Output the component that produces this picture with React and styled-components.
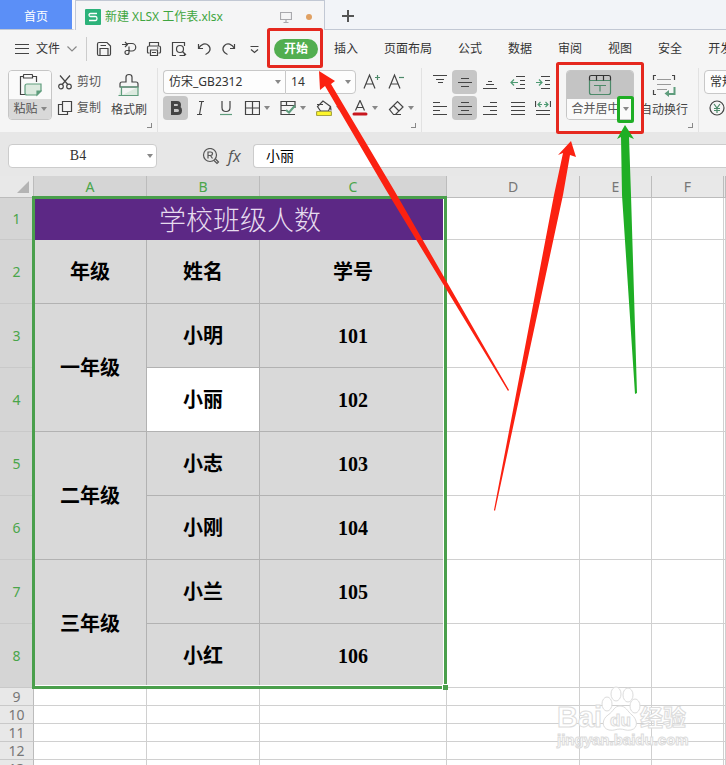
import styled, { createGlobalStyle } from "styled-components";
import { useState } from "react";

const MENUS = ["开始", "插入", "页面布局", "公式", "数据", "审阅", "视图", "安全", "开发工具"];
const COLUMNS = ["A", "B", "C", "D", "E", "F"];
const ROWS = [
    { a: "年级", b: "姓名", c: "学号" },
    { a: "一年级", span: 2, b: "小明", c: "101" },
    { b: "小丽", c: "102", active: true },
    { a: "二年级", span: 2, b: "小志", c: "103" },
    { b: "小刚", c: "104" },
    { a: "三年级", span: 2, b: "小兰", c: "105" },
    { b: "小红", c: "106" },
];
const EMPTY_ROWS = [9, 10, 11, 12, 13];

export default function App() {
    const [menu, setMenu] = useState("开始");
    const [formula, setFormula] = useState("小丽");
    return (
        <Page>
            <GlobalStyle />
            <TabBar />
            <MenuBar menu={menu} setMenu={setMenu} />
            <Ribbon />
            <FormulaBar>
                <NameBox>
                    <NameInput aria-label="名称框" defaultValue="B4" />
                    <Caret />
                </NameBox>
                <FormulaIcons>
                    <IconButton aria-label="查找"><FindIcon /></IconButton>
                    <FxButton aria-label="插入函数">fx</FxButton>
                </FormulaIcons>
                <FormulaInput aria-label="编辑栏" value={formula} onChange={(e) => setFormula(e.target.value)} />
            </FormulaBar>
            <Sheet />
            <Annotations />
        </Page>
    );
}

function TabBar() {
    return (
        <Tabs>
            <HomeTab>首页</HomeTab>
            <FileTab>
                <SheetLogo />
                <FileName>新建 XLSX 工作表.xlsx</FileName>
                <Icon w={12} h={12} c="#a9a9ad">
                    <path d="M.5 1.5h11v7H.5zM6 8.5V11M3.5 11.5h5" />
                </Icon>
                <Dot />
            </FileTab>
            <NewTab aria-label="新建标签">
                <Icon w={12} h={12} c="#555" sw={2}><path d="M6 0v12M0 6h12" /></Icon>
            </NewTab>
        </Tabs>
    );
}

function MenuBar({ menu, setMenu }) {
    return (
        <Menu>
            <FileButton>
                <Icon w={14} h={12}><path d="M0 1.5h14M0 5.5h14M0 10.5h14" /></Icon>
                文件
                <Icon w={10} h={6} c="#888"><path d="M.5.5 5 5 9.5.5" /></Icon>
            </FileButton>
            <QuickAccess>
                <IconButton aria-label="保存">
                    <Icon><path d="M1.5 3q0-1.5 1.5-1.5h8l3.5 3.5v8q0 1.5-1.5 1.5H3q-1.5 0-1.5-1.5zM4 14V7.5h8V14M4.5 4.5H10" /></Icon>
                </IconButton>
                <IconButton aria-label="输出">
                    <Icon><path d="M1 3.5h5M4 1l2.5 2.5L4 6M6.5 2.5H11a3.7 3.7 0 0 1 0 7.5H8M8 5.5v6a2 2 0 1 1-2-2h3" /></Icon>
                </IconButton>
                <IconButton aria-label="打印">
                    <Icon><path d="M3.5 5V1.5h9V5M3.5 12h-1q-1 0-1-1V6.5q0-1.5 1.5-1.5h10q1.5 0 1.5 1.5V11q0 1-1 1h-1M4.5 9h7v5.5h-7zM11 7h1.5M6 11.5h4" /></Icon>
                </IconButton>
                <IconButton aria-label="打印预览">
                    <Icon><path d="M5 14.5H1.5v-13h12V5M13.5 12v2.5h-5" /><circle cx="9" cy="8" r="3.5" /><path d="m11.5 10.5 3.5 3.5" /></Icon>
                </IconButton>
                <IconButton aria-label="撤销">
                    <Icon><path d="M2.5 3v4.5H7M2.5 7.5C5 3 9.5 1.5 12.5 4.5s1.5 7.5-3 9" /></Icon>
                </IconButton>
                <IconButton aria-label="恢复">
                    <Icon><path d="M13.5 3v4.5H9M13.5 7.5C11 3 6.5 1.5 3.5 4.5s-1.5 7.5 3 9" /></Icon>
                </IconButton>
                <IconButton aria-label="更多">
                    <Icon><path d="M4.5 5.5h8M5 8.5l3.5 3L12 8.5" /></Icon>
                </IconButton>
            </QuickAccess>
            <MenuList>
                {MENUS.map((m) => (
                    <MenuItem key={m} $on={m === menu} onClick={() => setMenu(m)}>{m}</MenuItem>
                ))}
            </MenuList>
        </Menu>
    );
}

function Ribbon() {
    return (
        <RibbonBar>
            <Group>
                <BigButton $w={44}>
                    <BigTop $light>
                        <Icon w={24} h={24}>
                            <path d="M5 3.5H2.5v18H8M15 3.5h3.5V9M5.5 2q0-.5.5-.5h8q.5 0 .5.5v3h-9z" />
                            <path d="M9 11h14v7l-4 4H9q-2 0-2-2v-7q0-2 2-2z" fill="#dceadf" stroke="#5f9d7d" />
                            <path d="M23 18h-4v4z" fill="#5f9d7d" stroke="#5f9d7d" />
                        </Icon>
                    </BigTop>
                    <BigLabel $grey>粘贴<Caret /></BigLabel>
                </BigButton>
                <Stack>
                    <TextButton>
                        <Icon><circle cx="4" cy="12.5" r="2.3" /><circle cx="12" cy="12.5" r="2.3" /><path d="M3 1.5 10.8 10.5M13 1.5 5.2 10.5" /></Icon>
                        剪切
                    </TextButton>
                    <TextButton>
                        <Icon><path d="M5.5 1.5h9v10h-9zM5.5 4.5h-4v10h9v-3" /></Icon>
                        复制
                    </TextButton>
                </Stack>
                <TallButton>
                    <Icon w={22} h={24}>
                        <path d="M8 9V4q0-2.5 3-2.5T14 4v5h4q2 0 2 2v3H2v-3q0-2 2-2z" />
                        <path d="M3.5 14v8.5H.5M20 14v8.5H3.5" fill="#dceadf" stroke="#5f9d7d" />
                        <path d="M2 14h18" stroke="#5f9d7d" />
                    </Icon>
                    <TallLabel>格式刷</TallLabel>
                </TallButton>
                <Launcher />
            </Group>
            <Group $font>
                <FontPart>
                    <FontLine>
                        <Combo $w={122}>
                            <Select aria-label="字体"><option>仿宋_GB2312</option></Select>
                            <Caret />
                        </Combo>
                        <Combo $w={71} $last>
                            <Select aria-label="字号"><option>14</option></Select>
                            <Caret />
                        </Combo>
                        <Tool aria-label="增大字号"><SizeIcon plus /></Tool>
                        <Tool aria-label="减小字号"><SizeIcon /></Tool>
                    </FontLine>
                    <FontTools>
                        <Tool $on aria-label="加粗"><Icon sw={3}><path d="M4.500 2.500H9q2.500 0 2.500 2.500T9 7.500H4.500zM4.500 7.500h5q3 0 3 3t-3 3h-5z" /></Icon></Tool>
                        <Tool aria-label="倾斜"><Icon><path d="M6 1.500h5M4 14.500h5M8.800 1.500l-2.300 13" /></Icon></Tool>
                        <Tool aria-label="下划线">
                            <Icon><path d="M4 1v6.500q0 4 4 4t4-4V1" /><path d="M2 14.500h12" stroke="#5f9d7d" /></Icon>
                        </Tool>
                        <DropTool aria-label="边框">
                            <Icon><path d="M1.500 1.500h14v13h-14zM8.500 1.500v13M1.500 8h14" /></Icon><Caret />
                        </DropTool>
                        <DropTool aria-label="绘图边框">
                            <Icon><path d="M1 5V1.500h14V8M6.500 1.500V5M1 5.500h14M1 5v9.500h9M1 10.500h5M10 14.500h5" /><path d="m6 10 3 2.500 6-7" stroke="#5f9d7d" strokeWidth="2" /></Icon><Caret />
                        </DropTool>
                        <DropTool aria-label="填充颜色">
                            <Icon>
                                <path d="m7 1-5.500 5.500L4.500 11h8l2-4.500zM1 4.500h6M14.500 6.500l.5 4" />
                                <rect x=".5" y="11.500" width="15" height="4" rx="1" fill="#fdf62b" stroke="#a8a540" />
                            </Icon>
                            <Caret />
                        </DropTool>
                        <DropTool aria-label="字体颜色">
                            <Icon><path d="M3.500 10.500 8 .5l4.500 10M5 7.500h6" /><path d="M2 14h12" stroke="#c8171e" strokeWidth="3" strokeLinecap="round" /></Icon><Caret />
                        </DropTool>
                        <DropTool aria-label="清除">
                            <Icon><path d="M1.500 9.500 9.500 1.500l5.500 5.500-7.500 7.500h-2zM5.500 5.500l5.500 5.500M7 14.500h6" /></Icon><Caret />
                        </DropTool>
                    </FontTools>
                </FontPart>
                <Launcher />
            </Group>
            <Group>
                <AlignGrid>
                    <Tool aria-label="顶端对齐"><Lines d="M1 1.500h14M4 5.500h8M6 8.500h5" /></Tool>
                    <Tool $on aria-label="垂直居中"><Lines d="M4 4.500h8M1 8.500h14M4 12.500h8" /></Tool>
                    <Tool aria-label="底端对齐"><Lines d="M6 7.500h4M4 10.500h8M1 14.500h14" /></Tool>
                    <Tool aria-label="减少缩进"><Lines d="M6 2.500h9M10 6.500h5M10 10.500h5M6 14.500h9" g="M1 8.500h7M4 5.500 1 8.500l3 3" /></Tool>
                    <Tool aria-label="增加缩进"><Lines d="M6 2.500h9M10 6.500h5M10 10.500h5M6 14.500h9" g="M1 8.500h6M4 5.500l3 3-3 3" /></Tool>
                    <Tool aria-label="左对齐"><Lines d="M1 2.500h7M1 6.500h14M1 10.500h7M1 14.500h14" /></Tool>
                    <Tool $on aria-label="水平居中"><Lines d="M4 2.500h8M1 6.500h14M4 10.500h8M1 14.500h14" /></Tool>
                    <Tool aria-label="右对齐"><Lines d="M8 2.500h7M1 6.500h14M8 10.500h7M1 14.500h14" /></Tool>
                    <Tool aria-label="两端对齐"><Lines d="M1 2.500h14M1 6.500h14M1 10.500h14M1 14.500h14" /></Tool>
                    <Tool aria-label="分散对齐"><Lines d="M.5 1v6M15.500 1v6M1 10.500h14M1 14.500h14" g="M3 4.500h4M5.500 2 3 4.500 5.500 7M9 4.500h4M10.500 2 13 4.500 10.500 7" /></Tool>
                </AlignGrid>
                <BigButton $w={68}>
                    <BigTop>
                        <Icon w={24} h={22} c="#4d8a6a">
                            <path d="M1.500 6.500v12q0 2 2 2h17q2 0 2-2v-12M1.500 6.500h21M6 11.500h12M12 11.500v6" />
                            <path d="M1.500 6.500V3q0-1.500 2-1.500h17q2 0 2 1.500v3.500M8.500 1.500v5M15.500 1.500v5" stroke="#333" />
                        </Icon>
                    </BigTop>
                    <BigLabel>合并居中<Caret /></BigLabel>
                </BigButton>
                <TallButton $wide>
                    <Icon w={26} h={24}>
                        <path d="M5 2.500H2.500V7M21 2.500h2.500V7M2.500 17v4.500H5" />
                        <path d="M6 6.500h14M6 11.500h14M6 16.500h10" stroke="#999" />
                        <path d="m18 17-4.500 3.500L18 24v-2h6.500V14h-2v6H18z" stroke="none" fill="#5f9d7d" />
                    </Icon>
                    <TallLabel>自动换行</TallLabel>
                </TallButton>
                <Launcher />
            </Group>
            <Group>
                <Stack>
                    <Combo $w={90} $last $round>
                        <Select aria-label="数字格式"><option>常规</option></Select>
                        <Caret />
                    </Combo>
                    <MoneyButton aria-label="货币">
                        <Icon><circle cx="8" cy="8" r="7" /><path d="m5 4 3 4 3-4M8 8v5M5 8.500h6M5 10.500h6" stroke="#4d8a6a" /></Icon>
                    </MoneyButton>
                </Stack>
            </Group>
        </RibbonBar>
    );
}

function Sheet() {
    return (
        <SheetArea>
            <Table>
                <colgroup>
                    <Col $w={34} /><Col $w={113} /><Col $w={113} /><Col $w={187} />
                    <Col $w={133} /><Col $w={72} /><Col $w={72} /><col />
                </colgroup>
                <thead>
                    <tr>
                        <Corner><svg width="12" height="12"><path d="M12 0v12H0z" fill="#b4b4b4" /></svg></Corner>
                        {COLUMNS.map((c, i) => <ColHead key={c} $on={i < 3}>{c}</ColHead>)}
                        <ColHead />
                    </tr>
                </thead>
                <tbody>
                    <Row $h={42}>
                        <RowHead $on>1</RowHead>
                        <TitleCell colSpan={3}>学校班级人数</TitleCell>
                        <Blanks n={4} />
                    </Row>
                    {ROWS.map((r, i) => (
                        <Row key={r.b} $h={64}>
                            <RowHead $on>{i + 2}</RowHead>
                            {r.a && <Picked rowSpan={r.span}>{r.a}</Picked>}
                            <Picked $active={r.active}>{r.b}</Picked>
                            <Picked>{r.c}</Picked>
                            <Blanks n={4} />
                        </Row>
                    ))}
                    {EMPTY_ROWS.map((n) => (
                        <Row key={n} $h={18}>
                            <RowHead>{n}</RowHead>
                            <Blanks n={7} />
                        </Row>
                    ))}
                </tbody>
            </Table>
            <Selection><Handle /></Selection>
        </SheetArea>
    );
}

function Blanks({ n }) {
    return Array.from({ length: n }, (_, i) => <Cell key={i} />);
}

function Icon({ w = 16, h = 16, c = "#444", sw = 1.2, children }) {
    return (
        <svg width={w} height={h} viewBox={`0 0 ${w} ${h}`} fill="none" stroke={c} strokeWidth={sw}>
            {children}
        </svg>
    );
}

function Lines({ d, g }) {
    return <Icon><path d={d} />{g && <path d={g} stroke="#4d9a72" />}</Icon>;
}

function Caret() {
    return <svg width="6" height="4"><path d="M0 0h6L3 4z" fill="#888" /></svg>;
}

function SizeIcon({ plus }) {
    return (
        <Icon w={18} h={18}>
            <path d="M1 15.500 6.500 2 12 15.500M3 11h7" />
            <path d={plus ? "M12 4.500h5M14.500 2v5" : "M11 4.500h5"} stroke="#4d8a6a" />
        </Icon>
    );
}

function SheetLogo() {
    return (
        <svg width="16" height="16" viewBox="0 0 16 16">
            <rect width="16" height="16" rx="1" fill="#2cb27a" />
            <path d="M12 4.500H5.500q-1.500 0-1.500 1.500t1.500 1.500h5q1.500 0 1.500 2t-1.500 2H4" fill="none" stroke="#fff" strokeWidth="1.3" />
        </svg>
    );
}

function FindIcon() {
    return (
        <Icon w={18} h={18} c="#555">
            <circle cx="8" cy="8" r="6.500" />
            <path d="M6 11.500V5h2.500q2 0 2 1.700t-2 1.800H6M8.500 8.500l2 3" />
            <path d="m12 13.500 3 3 1.500-1.500-3-3" />
        </Icon>
    );
}

// red and green tutorial marks, plus the site watermark
function Annotations() {
    return (
        <Overlay width="726" height="765" viewBox="0 0 726 765">
            <g fill="none" strokeWidth="3">
                <rect x="268.500" y="29.500" width="53" height="37" rx="1" stroke="#e5281e" />
                <rect x="557.500" y="63.500" width="85" height="69" rx="1" stroke="#e5281e" />
                <rect x="618.500" y="97.500" width="14" height="24" rx="1" stroke="#1fae25" />
            </g>
            <g fill="#fb2111">
                <path d="M319 71 335 81 331 84 394 190 509 390 508 391 386 190 325 86 320 90z" />
                <path d="M571 141 576 157 570 155 563 195 495 511 494 510 554 195 563 153 558 155z" />
            </g>
            <path d="M625 125 634 139 629 137 631 195 637 393 635 394 622 195 621 137 617 139z" fill="#1fae25" />
            <g fill="#fff" stroke="#dcdcdc" fontWeight="700" fontFamily="'Liberation Sans', 'Noto Sans CJK SC', sans-serif">
                <text x="557" y="727" fontSize="29">Bai</text>
                <ellipse cx="607" cy="704" rx="5" ry="7" />
                <ellipse cx="616" cy="694" rx="5" ry="7" />
                <ellipse cx="628" cy="695" rx="5" ry="7" />
                <ellipse cx="635" cy="706" rx="5" ry="7" />
                <path d="M620 706c6 0 7 5 12 9s7 13-1 15c-5 1-7-1-11-1s-6 2-11 1c-8-2-7-11-1-15s6-9 12-9z" />
                <text x="610" y="726" fontSize="17">du</text>
                <text x="640" y="726" fontSize="23">经验</text>
                <text x="557" y="745" fontSize="15">jingyan.baidu.com</text>
            </g>
        </Overlay>
    );
}

const GlobalStyle = createGlobalStyle`
* { box-sizing: border-box; }
body {
    margin: 0;
    font-family: 'Noto Sans', 'Noto Sans CJK SC', sans-serif;
    font-size: 12px;
    line-height: 16px;
    color: #333;
}
button, input, select { font: inherit; color: inherit; border: 0; padding: 0; margin: 0; background: none; outline: none; }
svg { display: block; flex: none; }
`
const Page = styled.div`
position: relative;
display: flex;
flex-direction: column;
height: 100vh;
overflow: hidden;
background: #fff;
`
const Tabs = styled.header`
display: flex;
flex: none;
height: 30px;
background: #f2f4f8;
`
const HomeTab = styled.button`
width: 75px;
background: #5b8ff7;
color: #fff;
border-right: 3px solid #f8f8fb;
border-bottom: 1px solid #c2c8d4;
padding-top: 4px;
`
const FileTab = styled.div`
display: flex;
align-items: center;
width: 250px;
padding: 2px 12px 0 9px;
background: #f5f5f6;
border: 1px solid #c2c8d4;
border-bottom: 0;
`
const FileName = styled.span`
flex: 1;
margin-left: 4px;
color: #3fa541;
white-space: nowrap;
`
const Dot = styled.i`
width: 6px;
height: 6px;
margin-left: 14px;
border-radius: 50%;
background: #e0a062;
`
const NewTab = styled.button`
flex: 1;
padding: 2px 0 0 17px;
border-bottom: 1px solid #c2c8d4;
`
const Menu = styled.nav`
display: flex;
flex: none;
align-items: center;
height: 38px;
background: #f5f5f5;
`
const FileButton = styled.button`
display: flex;
flex: none;
align-items: center;
gap: 7px;
height: 24px;
width: 87px;
padding-left: 15px;
border-right: 1px solid #ccc;
`
const QuickAccess = styled.div`
display: flex;
flex: none;
gap: 9px;
padding: 0 12px 0 9px;
`
const IconButton = styled.button`
flex: none;
display: flex;
`
const MenuList = styled.div`
display: flex;
gap: 6px;
`
const MenuItem = styled.button`
flex: none;
height: 20px;
padding: 0 10px;
border-radius: 10px;
background: ${(p) => (p.$on ? "#52ae50" : "none")};
color: ${(p) => (p.$on ? "#fff" : "#333")};
font-weight: ${(p) => (p.$on ? 700 : 400)};
`
const RibbonBar = styled.section`
display: flex;
flex: none;
height: 64px;
background: #f5f5f5;
overflow: hidden;
`
const Group = styled.div`
position: relative;
display: flex;
flex: none;
align-items: flex-start;
padding: 2px 10px 0 ${(p) => (p.$font ? 5 : 8)}px;
border-right: 1px solid #e2e2e2;
&:nth-child(3) { padding-left: 5px; }
&:last-child { padding-left: 5px; }
`
const BigButton = styled.button`
display: flex;
flex-direction: column;
width: ${(p) => p.$w}px;
height: 50px;
border: 1px solid #c6c6c6;
border-radius: 4px;
overflow: hidden;
`
const BigTop = styled.span`
display: flex;
flex: 1;
width: 100%;
align-items: center;
justify-content: center;
background: ${(p) => (p.$light ? "#fafafa" : "#c4c4c4")};
`
const BigLabel = styled.span`
display: flex;
align-items: center;
justify-content: center;
gap: 3px;
width: 100%;
height: 20px;
background: ${(p) => (p.$grey ? "#d9d9d9" : "#fafafa")};
color: #555;
`
const Stack = styled.div`
display: flex;
flex-direction: column;
gap: 2px;
`
const TextButton = styled.button`
display: flex;
align-items: center;
gap: 4px;
height: 24px;
padding: 0 5px;
color: #555;
`
const TallButton = styled.button`
display: flex;
flex-direction: column;
align-items: center;
gap: 5px;
padding: 3px 0 0 ${(p) => (p.$wide ? 6 : 5)}px;
color: #444;
`
const TallLabel = styled.span`
white-space: nowrap;
`
const Launcher = styled.i`
position: absolute;
right: 5px;
bottom: 4px;
width: 5px;
height: 5px;
border: solid #888;
border-width: 0 1px 1px 0;
`
const FontPart = styled.div`
display: flex;
flex-direction: column;
gap: 2px;
width: 248px;
`
const FontLine = styled.div`
display: flex;
`
const FontTools = styled.div`
display: flex;
`
const Combo = styled.span`
display: flex;
flex: none;
align-items: center;
width: ${(p) => p.$w}px;
height: 24px;
padding: 0 4px 0 5px;
margin-right: ${(p) => (p.$last ? 3 : 0)}px;
background: #fdfdfd;
border: 1px solid #c8c8c8;
border-right-width: ${(p) => (p.$last ? 1 : 0)}px;
border-radius: ${(p) => (p.$round ? "4px" : p.$last ? "0 4px 4px 0" : "4px 0 0 4px")};
`
const Select = styled.select`
appearance: none;
flex: 1;
min-width: 0;
`
const Tool = styled.button`
display: flex;
flex: none;
align-items: center;
justify-content: center;
width: 25px;
height: 24px;
border-radius: 4px;
background: ${(p) => (p.$on ? "#c6c6c6" : "none")};
`
const DropTool = styled(Tool)`
width: 36px;
gap: 4px;
padding-left: 2px;
`
const AlignGrid = styled.div`
display: grid;
grid-template-columns: 25px 25px 25px 28px 25px;
justify-items: end;
gap: 2px 0;
width: 139px;
`
const MoneyButton = styled(IconButton)`
height: 24px;
padding-left: 5px;
align-items: center;
`
const FormulaBar = styled.section`
display: flex;
flex: none;
height: 44px;
padding: 12px 0 8px 8px;
background: #e7e7e7;
`
const NameBox = styled.div`
display: flex;
align-items: center;
width: 149px;
padding-right: 3px;
background: #fff;
border: 1px solid #ccc;
border-radius: 4px;
`
const NameInput = styled.input`
flex: 1;
min-width: 0;
text-align: center;
font-family: 'Liberation Serif', serif;
font-size: 14px;
`
const FormulaIcons = styled.div`
display: flex;
align-items: center;
gap: 8px;
width: 96px;
padding-left: 45px;
`
const FxButton = styled.button`
font-family: 'Open Sans', sans-serif;
font-style: italic;
font-size: 16px;
color: #555;
`
const FormulaInput = styled.input`
flex: 1;
min-width: 0;
padding: 0 12px;
background: #fff;
border: 1px solid #ccc;
border-right: 0;
border-radius: 4px 0 0 4px;
font-size: 14px;
color: #000;
`
const SheetArea = styled.main`
position: relative;
flex: 1;
min-height: 0;
overflow: hidden;
`
const Table = styled.table`
width: 100%;
table-layout: fixed;
border-collapse: separate;
border-spacing: 0;
`
const Col = styled.col`
width: ${(p) => p.$w}px;
`
const Row = styled.tr`
height: ${(p) => p.$h}px;
`
const Cell = styled.td`
padding: 0;
border: solid #d0d0d0;
border-width: 0 1px 1px 0;
`
const Picked = styled(Cell)`
background: ${(p) => (p.$active ? "#fff" : "#d9d9d9")};
border-color: #b2b2b2;
text-align: center;
font-family: 'Liberation Serif', 'Noto Sans CJK SC', serif;
font-size: 20px;
line-height: 24px;
font-weight: 700;
color: #000;
`
const TitleCell = styled(Cell)`
background: #5c2885;
border-color: #5c2885;
text-align: center;
font-family: 'Noto Sans CJK SC', sans-serif;
font-size: 27px;
line-height: 32px;
font-weight: 300;
color: #e6dcee;
`
const Head = styled.th`
padding: 0;
background: ${(p) => (p.$on ? "#d5d5d5" : "#e8e8e8")};
color: ${(p) => (p.$on ? "#4aa54a" : "#777")};
border: solid #bcbcbc;
border-width: 0 1px 1px 0;
font-size: 14px;
line-height: 16px;
font-weight: 400;
`
const ColHead = styled(Head)`
height: 22px;
`
const RowHead = styled(Head)`
border-bottom-color: #c9c9c9;
`
const Corner = styled(Head)`
svg { margin: 0 4px 0 auto; }
`
const Selection = styled.div`
position: absolute;
left: 32px;
top: 20px;
width: 415px;
height: 493px;
border: 3px solid #4a9f4c;
box-shadow: inset -1px -1px #fff;
`
const Handle = styled.i`
position: absolute;
right: -4px;
bottom: -4px;
width: 6px;
height: 6px;
background: #4a9f4c;
border: solid #fff;
border-width: 1px 0 0 1px;
`
const Overlay = styled.svg`
position: absolute;
left: 0;
top: 0;
pointer-events: none;
`
